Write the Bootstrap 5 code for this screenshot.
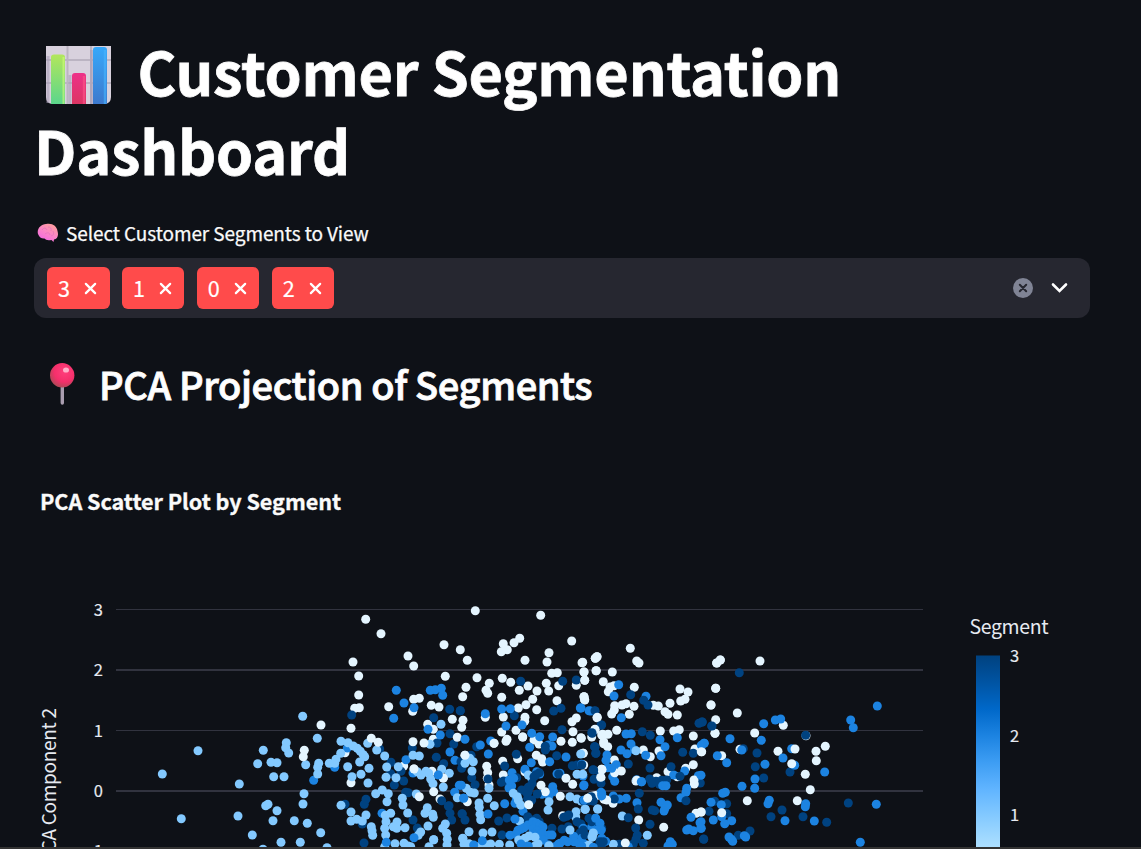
<!DOCTYPE html>
<html lang="en" data-bs-theme="dark">
<head>
<meta charset="utf-8">
<meta name="viewport" content="width=device-width, initial-scale=1">
<title>Customer Segmentation Dashboard</title>
<link href="https://cdn.jsdelivr.net/npm/bootstrap@5.3.0/dist/css/bootstrap.min.css" rel="stylesheet">
<style>
body{background:#0e1117;color:#fafafa;font-family:"Noto Sans CJK SC","Noto Sans",sans-serif;height:849px;overflow:hidden}
.page-col{width:1090px;padding-left:34px;height:847px;overflow:hidden}
.dash-title{font-size:59.4px;line-height:79px;font-weight:700;padding-top:31px;letter-spacing:-.23px;-webkit-text-stroke:.8px #fafafa}
.dash-title svg{width:66px;height:58px;margin:0 25.5px 0 12px;vertical-align:-8px}
.pick-label{font-size:19px;line-height:30px;margin-top:29px;height:30px;letter-spacing:-.09px;-webkit-text-stroke:.25px #fafafa}
.pick-label svg{width:22px;height:20px;margin:0 7px 0 3px}
.picker{height:60px;margin-top:10px;background:#262730;border-radius:12px;padding:0 20px 0 13px}
.seg-tag{width:62.5px;height:42px;border-radius:6px;background:#ff4b4b;font-size:21.6px;padding:0 12.5px 0 11px;color:#fff;-webkit-text-stroke:.2px #fff}
.sub-title{font-size:38px;line-height:50px;font-weight:500;margin-top:41px;height:50px;letter-spacing:-.37px;-webkit-text-stroke:.9px #fafafa}
.sub-title svg{width:26px;height:43px;margin:0 24px 0 15px}
.pca-chart{display:block;margin-top:31px}
.edge{height:2px;background:#333}
</style>
</head>
<body>
<main class="page-col">
  <h1 class="dash-title mb-0"><svg viewBox="0 0 66 58"><defs>
    <linearGradient id="g1" x2="0" y2="1"><stop stop-color="#b2e65c"/><stop offset="1" stop-color="#5bd68c"/></linearGradient>
    <linearGradient id="g2" x2="0" y2="1"><stop stop-color="#ed3189"/><stop offset="1" stop-color="#dc3563"/></linearGradient>
    <linearGradient id="g3" x2="0" y2="1"><stop stop-color="#36a8fa"/><stop offset="1" stop-color="#3d79cd"/></linearGradient></defs>
    <path d="M0 0H65V51Q65 58 58 58H7Q0 58 0 51Z" fill="#d8d1dd"/>
    <path d="M0 14H65M0 37H65M21.5 0V58M45 0V58" stroke="#bbb4c2" stroke-width="2"/>
    <path d="M2 10V57M24 29V58M45.500 4V58" stroke="#aaa0b9" stroke-width="3" opacity=".6"/>
    <path d="M5 58V11Q5 8.500 8 8.500H16Q19 8.500 19 11V58Z" fill="url(#g1)"/><path d="M17.500 11V58" stroke="#d1ff78" stroke-width="2" opacity=".6"/>
    <path d="M26 58V30Q26 27 29 27H37Q40 27 40 30V58Z" fill="url(#g2)"/><path d="M38 30V58" stroke="#fb5187" stroke-width="2.500" opacity=".7"/>
    <path d="M47 58V4Q47 1 50 1H58Q61 1 61 4V58Z" fill="url(#g3)"/><path d="M59 4V58" stroke="#49b6ff" stroke-width="2.500" opacity=".6"/></svg><span>Customer Segmentation</span><br><span>Dashboard</span></h1>
  <div class="pick-label d-flex align-items-center"><svg viewBox="0 0 22 20"><defs><linearGradient id="gb" x1=".8" y1="0" x2=".2" y2="1"><stop stop-color="#ffa09a"/><stop offset=".5" stop-color="#fb85c7"/><stop offset="1" stop-color="#f264e5"/></linearGradient></defs>
    <path d="M1 11C-.5 6 4 1 9 1C15-.5 20 3 20.500 8C22 13 20 16 17 16.500L16.500 19L14.500 17Q9 18 7.500 15.500Q3 16 1 11Z" fill="url(#gb)"/><path d="M5 7Q8 3 10 7M11 4Q15 4 14 8M8 11Q12 8 13 12M16 8Q18 12 14 13" fill="none" stroke="#e272bb" stroke-width=".7"/></svg><span>Select Customer Segments to View</span></div>
  <div class="picker d-flex align-items-center">
    <div class="d-flex" style="gap:12.4px">
      <div class="seg-tag d-flex align-items-center justify-content-between"><span>3</span><svg width="13" height="13" viewBox="0 0 14 14"><path d="M2 2L12 12M12 2L2 12" stroke="#fff" stroke-width="2.400" stroke-linecap="round"/></svg></div>
      <div class="seg-tag d-flex align-items-center justify-content-between"><span>1</span><svg width="13" height="13" viewBox="0 0 14 14"><path d="M2 2L12 12M12 2L2 12" stroke="#fff" stroke-width="2.400" stroke-linecap="round"/></svg></div>
      <div class="seg-tag d-flex align-items-center justify-content-between"><span>0</span><svg width="13" height="13" viewBox="0 0 14 14"><path d="M2 2L12 12M12 2L2 12" stroke="#fff" stroke-width="2.400" stroke-linecap="round"/></svg></div>
      <div class="seg-tag d-flex align-items-center justify-content-between"><span>2</span><svg width="13" height="13" viewBox="0 0 14 14"><path d="M2 2L12 12M12 2L2 12" stroke="#fff" stroke-width="2.400" stroke-linecap="round"/></svg></div>
    </div>
    <svg class="ms-auto" width="20" height="20" viewBox="0 0 20 20"><circle cx="10" cy="10" r="10" fill="#808495"/><path d="M6.800 6.800L13.200 13.200M13.200 6.800L6.800 13.200" stroke="#262730" stroke-width="2" stroke-linecap="round"/></svg>
    <svg style="margin-left:17px" width="20" height="20" viewBox="0 0 20 20"><path d="M3 6.500L9.500 13L16 6.500" fill="none" stroke="#fff" stroke-width="2.600" stroke-linecap="round"/></svg>
  </div>
  <h2 class="sub-title mb-0 d-flex align-items-center"><svg viewBox="0 0 26 43"><defs><radialGradient id="gp" cx=".6" cy=".35" r=".7"><stop stop-color="#ff3f7c"/><stop offset=".6" stop-color="#f52f6b"/><stop offset="1" stop-color="#a94a55"/></radialGradient></defs><path d="M13.300 22V40" stroke="#a99daf" stroke-width="3.400" stroke-linecap="round"/><circle cx="13.200" cy="12.300" r="12.200" fill="url(#gp)"/><ellipse cx="17" cy="7" rx="3" ry="2.600" fill="#ffafc8"/></svg><span>PCA Projection of Segments</span></h2>
  <svg class="pca-chart" width="1056" height="410" viewBox="34 440 1056 410">
    <defs><linearGradient id="scale" gradientUnits="userSpaceOnUse" x1="0" y1="656" x2="0" y2="895"><stop offset="0" stop-color="#004280"/><stop offset=".111" stop-color="#0054a3"/><stop offset=".222" stop-color="#0068c9"/><stop offset=".333" stop-color="#1c83e1"/><stop offset=".444" stop-color="#3d9df3"/><stop offset=".556" stop-color="#60b4ff"/><stop offset=".667" stop-color="#83c9ff"/><stop offset=".778" stop-color="#a6dcff"/><stop offset=".889" stop-color="#c7ebff"/><stop offset="1" stop-color="#e4f5ff"/></linearGradient></defs>
    <text x="40" y="510" font-size="21.600" font-weight="700" fill="#fafafa" stroke="#fafafa" stroke-width=".3" textLength="301">PCA Scatter Plot by Segment</text>
    <path d="M116 609.500H923M116 730.500H923" stroke="#31333f"/><path d="M116 670H923M116 791H923" stroke="#31333f" stroke-width="2"/>
    <g font-size="16.500" fill="#e6eaf1" stroke="#e6eaf1" stroke-width=".15" text-anchor="end"><text x="103" y="616">3</text><text x="103" y="676">2</text><text x="103" y="737">1</text><text x="103" y="797">0</text><text x="103" y="857">−1</text></g>
    <text transform="translate(56 864) rotate(-90)" font-size="19" fill="#e6eaf1" textLength="156">PCA Component 2</text>
    <g id="points"></g>
    <text x="969.500" y="634" font-size="19.500" fill="#e6eaf1" textLength="79">Segment</text>
    <rect x="976" y="655.500" width="24" height="200" fill="url(#scale)"/>
    <g font-size="16.500" fill="#e6eaf1" stroke="#e6eaf1" stroke-width=".15"><text x="1010" y="662">3</text><text x="1010" y="742">2</text><text x="1010" y="821">1</text></g>
  </svg>
</main>
<div class="edge"></div>
<script>
// Each panel: origin, then [segment, "x,y x,y ..."] runs in thirds of a pixel, painted in order.
const fill = ['#e4f5ff', '#83c9ff', '#1c83e1', '#004280'];
const panels = [
 [20,590,[[1,'534,482 427,552 484,686']]],
 [220,600,[
  [2,'281,541 344,502'],
  [1,'248,349 292,415 199,428 197,443 206,459 130,451 113,491 153,487 171,488 257,494 296,490 293,502 293,522 161,530 192,530 58,552 252,581 249,612 137,617 144,613 171,632 159,662 54,648 223,662 262,670 97,705 183,727 241,727 302,698 321,743 129,748 328,490 344,490 348,478'],
  [0,'303,375 253,451 250,470']]],
 [340,600,[
  [0,'77,58 123,101 39,186 56,228 56,285 44,325 58,323 33,385 204,168 221,198 312,134 316,229 146,320 221,298 238,295 218,334 274,316 297,321 337,358 263,373 280,388 280,418 15,458 33,548 191,498 310,534'],
  [3,'35,345 281,353 329,328 361,332 330,401 341,432 291,429 217,444 119,447 289,472 311,491 153,487 152,521 183,514 163,555 191,543 197,577 205,578 15,613 78,598 73,613 67,672 72,729 219,660 232,684 365,505 327,617 330,640 335,660 367,642'],
  [2,'169,271 192,309 222,323 161,355 271,271 286,269 304,265 308,286 264,388 301,405 22,444 198,479 330,456 345,481 126,640'],
  [1,'3,424 24,428 40,438 52,445 61,454 70,464 74,470 2,460 59,486 23,500 87,505 63,523 36,530 84,549 83,430 110,450 134,468 140,501 138,532 175,500 168,533 219,466 238,468 303,373 270,433 107,581 127,570 145,581 141,605 187,595 189,615 203,639 3,616 33,636 33,663 50,658 78,645 67,663 94,680 96,692 98,706 152,640 136,646 138,665 134,685 137,705 171,666 170,685 160,680 195,683'],
  [0,'94,415 115,427 219,425 252,429 352,412 222,507 276,514'],
  [2,'219,519'],
  [1,'232,515 243,525 258,514 266,520 272,537 279,551 310,561 305,508 328,520 229,582 262,623 278,643 255,640 264,678 280,652 242,696 235,706 281,719 316,672 308,685 320,700 322,718 321,735 192,730 165,731 134,740 267,740 212,740'],
  [0,'222,507 238,590 281,575 310,534 300,597'],
  [2,'295,525 344,577 358,556 222,713 139,727'],
  [3,'305,602 325,618'],
  [1,'204,738 281,719 368,715 352,593']]],
 [460,600,[
  [0,'46,32 242,46 335,123 1,149 22,181 179,115 162,128 130,131 142,149 124,155 195,181 267,158 261,186 366,188 411,170 406,175 275,220 292,218 372,216 408,212 51,233 127,235 152,247 88,250 78,271 83,280 18,262 8,290 204,258 178,271 231,273 266,273 259,250 296,257 374,241 349,256 372,290 374,300 125,292 218,298 291,302 198,314 175,324 230,329 195,352 194,364 254,362 130,351 76,352 9,361 5,382 168,391 188,411 125,396 141,418 138,424 102,430 15,466 80,499 83,518 82,535 87,555 128,484 173,476 130,525 195,515 229,466 245,476 222,420 237,432 248,486 303,424 336,365 349,354 339,395 337,427 363,413 370,460 371,495'],
  [3,'1,332 182,244 308,244 349,240 281,333 303,325 163,347 306,389 50,440 33,466 3,485 169,463 35,533 45,554 134,498 6,641'],
  [2,'76,341 125,327 151,326 186,375 138,378 361,324 387,332 15,418 61,435 85,462 92,423 215,400 239,410 278,411 209,442 265,435 258,445 276,438 269,485 214,488 318,471 156,518 195,508 230,515 239,522 291,521 300,520 372,555 369,528'],
  [1,'15,490 29,475 40,485 36,513 87,565 43,579 19,565 31,577 83,595 57,609 58,622 60,643 62,659 103,617 351,523 205,525 215,535'],
  [0,'102,430 188,411 15,466'],
  [3,'84,537 228,524 222,530 238,518 296,522 256,450 290,467 256,439 351,495 337,497 362,493 131,543 124,547 170,533 216,550 205,562 199,577 203,595 215,600 185,570'],
  [2,'4,556 161,535 155,558 147,564 148,540 11,595 134,611 84,642 278,560 281,575 267,587 246,583 169,597 165,610 189,634'],
  [1,'160,580 172,590 175,600 182,615 267,605 264,630 330,590 351,597 348,635 347,651 179,664 27,695 69,699 96,696'],
  [0,'206,614 243,556 256,575 301,589 318,535 338,553 22,605 308,647'],
  [3,'15,660 141,654 116,663 232,582 205,575 210,560 203,650 126,705 217,660 230,655 205,665 238,665 306,687 276,685 311,652 320,649 326,645 363,672 351,665 360,699 325,680'],
  [2,'11,595 165,657 182,688 192,683 204,675 219,665 230,670 239,675 249,681 174,691 167,703 150,706 219,688 232,693 235,707 247,698 266,705 276,705 220,702 341,709 342,725 323,725 300,730 356,730 285,740 265,734 250,720'],
  [1,'195,715 207,708 176,720 149,735 118,733 78,734 92,732 27,731 9,716 12,733 55,740 234,732 225,738 225,712 267,737 330,690'],
  [2,'41,735 67,722 183,732 205,738 295,733 313,721']]],
 [580,600,[
  [0,'151,145 51,170 46,175 170,183 177,189 8,187 12,216 49,212 97,216 14,241 12,290 14,299 70,245 163,262 85,275 90,261 102,257 300,267 324,276 302,303 315,298 407,265 421,180 410,189 393,315 270,310 220,316 235,318 255,335 264,343 292,345 138,311 126,315 162,319 148,343 104,317 103,330 95,342 51,353 110,391 241,393 281,393 298,389 340,408 4,415 45,389 65,405 84,403 35,411 71,431 83,440 9,460 211,470 190,450 237,453 405,400 365,455 345,447 340,494 317,505 65,508 63,533 8,495 103,480 230,533 264,515 168,543 292,530'],
  [2,'116,254 102,288 198,289 124,353 3,324 32,333 44,334 138,402 154,401 240,419 255,440 243,467 292,413 153,432 163,449 123,450 141,461 197,466 372,430 81,465 78,481 109,494 5,493 83,503 98,530 104,544 170,539 185,545 11,557 314,513 281,525 355,527'],
  [3,'152,284 191,301 204,315 187,395 211,406 357,370 366,366 395,378 63,375 36,397 44,440 48,460 145,492 210,504 273,500 39,509 42,538 60,520 63,550 308,457 340,460 209,537 228,544 245,541 260,540 238,553 216,550 300,529 361,549 178,580 5,495'],
  [1,'2,462 8,523 168,452 15,628 53,627 127,648 4,603'],
  [0,'104,518 124,513 65,508 170,541 342,540 343,552 51,586 32,590 40,588 72,598 99,610 176,660 251,682 348,640 363,636'],
  [2,'95,505 248,557 258,557 320,565 318,577 303,593 243,607 262,615 255,625 252,633 171,608 139,595 118,597 100,588 63,577 66,588 184,545 333,652'],
  [3,'318,602 217,630 224,632 175,627 145,653 210,673 167,684 37,601 11,601 23,603 172,706 168,718 190,730 371,717 160,732 103,597'],
  [2,'46,655 57,670 61,688 35,680 10,685 360,668 362,685 326,687 340,692 320,690 271,725 277,733 264,738 5,715 14,733 110,735 145,740'],
  [3,'35,665 57,682 10,690 15,705 70,725 65,735 118,733'],
  [0,'40,700 136,729'],[1,'202,706 36,711 25,738 100,733'],[2,'8,740 77,724']]],
 [700,600,[
  [0,'61,180 50,189 180,183 47,265 33,315 112,339 47,359 45,400 250,376 164,399 234,454 376,439 348,454 349,482 316,523 331,569 142,602 292,602 120,448 65,467 318,407'],
  [3,'118,218 7,366 36,378 317,406 171,459 166,500 191,534 270,516 130,446 445,609 380,667 309,650 246,630 213,650 80,611 44,604 27,634 80,641 150,693 115,706 11,718'],
  [2,'532,318 452,360 460,383 226,360 242,357 191,371 184,421 90,416 13,430 52,467 80,488 249,474 195,493 284,496 374,516 275,446 165,537 164,565 126,559 68,580 76,577 33,607 64,614 204,611 208,601 317,611 316,620 343,663 255,662 529,613 481,727 40,660 65,650 74,671 95,662 87,711 98,724 94,718 133,707 137,711 125,450 3,526 3,665 4,685 4,436'],
  [0,'285,447 275,491 65,638 4,455 4,636']]],
 [460,600,[
  [3,'405,332 425,375 404,440 407,460 397,400 370,602 399,602 387,655 425,685'],
  [0,'412,352 428,403 405,388 431,425 426,509 422,532 440,600 405,588'],
  [2,'372,601 425,580 407,655 420,670 424,690 410,690 425,715'],
  [3,'396,398 400,603 405,442 401,510 394,590 420,725'],
  [1,'376,628 413,627 397,711 400,699 387,735 374,740'],
  [0,'383,595'],[3,'430,725'],[2,'400,742 365,738 425,587']]]
];
document.getElementById('points').innerHTML = panels.map(([ox, oy, runs]) => runs.map(([s, pts]) =>
  pts.split(' ').map(p => { const [x, y] = p.split(','); return `<circle cx="${(ox + x / 3).toFixed(1)}" cy="${(oy + y / 3).toFixed(1)}" r="4.5" fill="${fill[s]}"/>`; }).join('')).join('')).join('');
</script>
<script src="https://cdn.jsdelivr.net/npm/bootstrap@5.3.0/dist/js/bootstrap.bundle.min.js"></script>
</body>
</html>
